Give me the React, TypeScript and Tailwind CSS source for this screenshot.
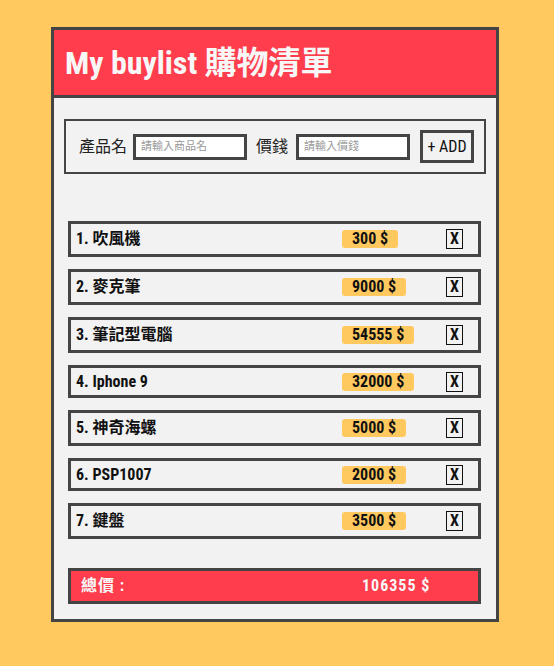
import React from "react";

const items = [
  { name: "吹風機", price: 300, tall: true },
  { name: "麥克筆", price: 9000, tall: true },
  { name: "筆記型電腦", price: 54555, tall: true },
  { name: "Iphone 9", price: 32000, tall: false },
  { name: "神奇海螺", price: 5000, tall: true },
  { name: "PSP1007", price: 2000, tall: false },
  { name: "鍵盤", price: 3500, tall: true },
];

const FONT = {
  fontFamily: "'Roboto Condensed', Roboto, 'Noto Sans CJK TC', sans-serif",
};

export default function App() {
  const total = items.reduce((s, i) => s + i.price, 0);
  return (
    <div className="min-h-[666px] w-[554px] bg-[#ffc95f] pt-[27px]" style={FONT}>
      <div className="ml-[51px] w-[448px] border-[3px] border-[#444] bg-[#f2f2f2]">
        <div className="flex h-[68px] items-center border-b-[3px] border-[#444] bg-[#ff3d4d] pl-[11px]">
          <h1 className="text-[32px] font-bold leading-none text-[#f7f7f7]">My buylist 購物清單</h1>
        </div>
        <div className="px-[10px] pt-[21px] pb-[15px]">
          <div className="flex h-[55px] items-center border-2 border-[#444] pl-[13px]">
            <span className="text-[16px] text-[#222]">產品名</span>
            <input
              className="ml-[6px] h-[26px] w-[114px] border-[3px] border-[#444] bg-white px-[5px] text-[11px] outline-none placeholder:text-[#999]"
              placeholder="請輸入商品名"
            />
            <span className="ml-[9px] text-[16px] text-[#222]">價錢</span>
            <input
              className="ml-[8px] h-[26px] w-[114px] border-[3px] border-[#444] bg-white px-[5px] text-[11px] outline-none placeholder:text-[#999]"
              placeholder="請輸入價錢"
            />
            <button className="ml-[10px] h-[33px] w-[54px] border-[3px] border-[#444] bg-[#f2f2f2] text-[16px] text-[#111]">
              + ADD
            </button>
          </div>
          <div className="mt-[47px] ml-[4px] mr-[5px] flex flex-col gap-[12px]">
            {items.map((it, idx) => (
              <div
                key={idx}
                className={`flex items-center border-[3px] border-[#444] pl-[5px] ${it.tall ? "h-[36px]" : "h-[33px]"}`}
              >
                <span className="w-[266px] text-[16px] font-bold text-[#111]">
                  {idx + 1}. {it.name}
                </span>
                <div className="w-[104px]">
                  <span className="inline-flex h-[18px] items-center rounded-[3px] bg-[#ffc95f] px-[10px] text-[16px] font-bold text-[#111]">
                    {it.price} $
                  </span>
                </div>
                <span className="flex h-[20px] w-[17px] items-center justify-center border border-[#111] text-[16px] font-bold text-[#111]">
                  X
                </span>
              </div>
            ))}
          </div>
          <div className="mt-[29px] ml-[4px] mr-[5px] flex h-[36px] items-center border-[3px] border-[#444] bg-[#ff3d4d] pl-[10px] text-[16px] font-bold tracking-[1px] text-[#f7f7f7]">
            <span className="w-[281px]">總價 :</span>
            <span>{total} $</span>
          </div>
        </div>
      </div>
    </div>
  );
}
